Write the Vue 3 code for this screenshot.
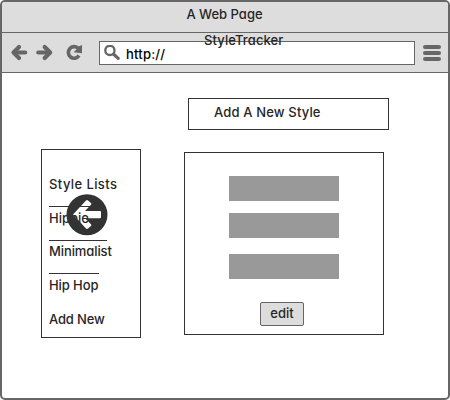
<script setup>
const styles = [
  { name: 'Hippie', rule: 'short' },
  { name: 'Minimalist', rule: 'long' },
  { name: 'Hip Hop', rule: 'medium' },
]
</script>

<template>
  <div class="browser">
    <header class="titlebar"><span>A Web Page</span></header>
    <div class="toolbar">
      <svg class="nav" width="90" height="20" viewBox="0 0 90 20">
        <g fill="none" stroke="#666" stroke-width="4.200" stroke-linejoin="round">
          <path d="M12 9.500h11.200" stroke-linecap="round" />
          <path d="M17 4l-5.500 5.500L17 15" stroke-linecap="round" />
          <path d="M36.300 9.500h11.200" stroke-linecap="round" />
          <path d="M42.700 4l5.500 5.500-5.500 5.500" stroke-linecap="round" />
          <path d="M76.500 5.600A5.800 5.800 0 1 0 77 12.600" stroke-width="3.600" />
        </g>
        <path d="M80 2v8.300l-8.500-1.100 3-2.700 2-3z" fill="#666" />
      </svg>
      <div class="address">
        <svg width="18" height="18" viewBox="0 0 18 18">
          <circle cx="5.900" cy="5.400" r="4.600" fill="none" stroke="#666" stroke-width="2.300" />
          <path d="M9.700 9.300l4.500 4.100" stroke="#666" stroke-width="3.200" stroke-linecap="round" />
        </svg>
        <span>http://</span>
      </div>
      <div class="menu"><i></i><i></i><i></i></div>
      <span class="app-name">StyleTracker</span>
    </div>
    <main class="page">
      <nav class="sidebar">
        <div class="heading">Style Lists</div>
        <div v-for="s in styles" :key="s.name" class="entry">
          <div class="rule" :class="s.rule"></div>
          <span :class="s.rule + '-name'">{{ s.name }}</span>
        </div>
        <div class="add">Add New</div>
        <svg class="back" width="42" height="42" viewBox="0 0 42 42">
          <path
            fill="#333"
            fill-rule="evenodd"
            d="M21 .200a20.500 20.500 0 1 0 0 41a20.500 20.500 0 1 0 0-41zM7 20.500L20 6.500q1-.800 2 0l3 2.500q.800 1 0 1.800L19 16.900H34q1 0 1 1v5.400q0 1-1 1H19L25 30.200q.800 1 0 1.800L22 34.500q-1 .800-2 0z"
          />
        </svg>
      </nav>
      <section class="content">
        <div class="new-style"><span>Add A New Style</span></div>
        <div class="panel">
          <div class="bar"></div>
          <div class="bar"></div>
          <div class="bar last"></div>
          <button class="edit">edit</button>
        </div>
      </section>
    </main>
  </div>
</template>

<style>
body {
  background: #fff;
}
</style>

<style scoped>
* {
  box-sizing: border-box;
}
.browser {
  width: 450px;
  height: 400px;
  border: 2px solid #666;
  border-radius: 5px;
  overflow: hidden;
  background: #fff;
  color: #262626;
  font: 500 13px/17px Inter, sans-serif;
  font-feature-settings: 'cv11';
}
.titlebar {
  height: 31px;
  padding: 4px 1px 0 0;
  background: #ddd;
  border-bottom: 1px solid #666;
  text-align: center;
}
.toolbar {
  position: relative;
  display: flex;
  height: 40px;
  padding-top: 8px;
  background: #ddd;
  border-bottom: 1px solid #666;
}
.nav {
  margin: 2px 7px 0 0;
}
.address {
  display: flex;
  width: 316px;
  height: 24px;
  padding: 3px 4px;
  border: 1px solid #666;
  background: #fff;
  color: #000;
}
.address span {
  margin: 1px 0 0 4px;
  letter-spacing: 0.2px;
}
.menu {
  display: flex;
  flex-direction: column;
  gap: 2px;
  width: 18px;
  margin: 4px 0 0 8px;
}
.menu i {
  height: 4px;
  border-radius: 2px;
  background: #666;
}
.app-name {
  position: absolute;
  left: 202px;
  top: -1px;
  letter-spacing: 0.1px;
}
.page {
  display: flex;
  align-items: flex-start;
  padding: 25px 0 0 39px;
}
.sidebar {
  position: relative;
  width: 100px;
  height: 189px;
  margin-top: 51px;
  padding: 26px 0 0 7px;
  border: 1px solid #333;
}
.heading {
  height: 30px;
  letter-spacing: 0.4px;
}
.entry {
  height: 33.5px;
}
.rule {
  height: 1px;
  margin-bottom: 2.5px;
  background: #333;
}
.short {
  width: 42px;
}
.long {
  width: 58px;
}
.medium {
  width: 50px;
}
.long-name,
.medium-name {
  letter-spacing: -0.1px;
}
.add {
  padding-top: 4.5px;
  letter-spacing: -0.15px;
}
.back {
  position: absolute;
  left: 24px;
  top: 44px;
}
.content {
  margin-left: 43px;
}
.new-style {
  width: 201px;
  height: 32px;
  margin-left: 4px;
  padding: 5px 25px;
  border: 1px solid #333;
  letter-spacing: 0.15px;
}
.panel {
  display: flex;
  flex-direction: column;
  width: 200px;
  height: 183px;
  margin-top: 22px;
  padding: 23px 44px 0;
  border: 1px solid #333;
}
.bar {
  width: 110px;
  height: 25px;
  margin-bottom: 12px;
  background: #999;
}
.bar.last {
  margin: 4px 0 23px;
}
.edit {
  width: 44px;
  height: 24px;
  margin-left: 31px;
  padding: 0 0 2px;
  border: 1px solid #666;
  border-radius: 2px;
  background: #ddd;
  color: inherit;
  font: inherit;
  font-feature-settings: inherit;
}
</style>
